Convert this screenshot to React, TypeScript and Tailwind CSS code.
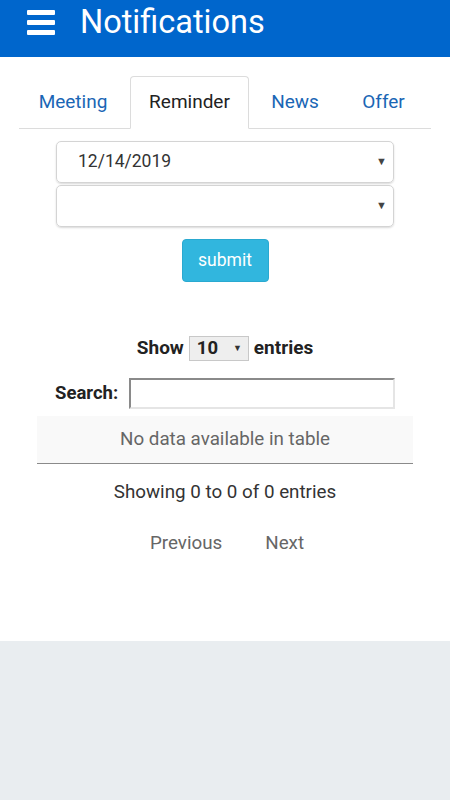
import React from "react";

export default function App() {
  const font = { fontFamily: "Roboto, 'Noto Sans', sans-serif" };
  return (
    <div className="w-[450px] h-[800px] flex flex-col bg-[#e9edf0]" style={font}>
      <header className="h-[57px] bg-[#0066cc] flex items-center">
        <div className="ml-[27px] w-[28px] flex flex-col gap-[5px] -mt-[13px]">
          <div className="h-[5px] bg-white rounded-[1px]" />
          <div className="h-[5px] bg-white rounded-[1px]" />
          <div className="h-[5px] bg-white rounded-[1px]" />
        </div>
        <h1 className="ml-[25px] text-[32.5px] leading-none text-white -mt-[13px]">Notifications</h1>
      </header>
      <main className="bg-white h-[584px] flex flex-col">
        <div className="mx-[19px] mt-[20px] h-[52px] border-b border-[#dcdcdc] flex items-end text-[19px]">
          <div className="w-[111px] h-full flex items-center justify-center text-[#1a66b5] pr-[3px]">Meeting</div>
          <div className="w-[119px] h-[53px] -mb-px bg-white border border-[#dcdcdc] border-b-white rounded-t-[4px] flex items-center justify-center text-[#222]">Reminder</div>
          <div className="w-[92px] h-full flex items-center justify-center text-[#1a66b5]">News</div>
          <div className="w-[85px] h-full flex items-center justify-center text-[#1a66b5]">Offer</div>
        </div>
        <div className="mx-[56px] mt-[12px] flex flex-col gap-[2px]">
          <div className="h-[42px] border border-[#d4d4d4] rounded-[5px] shadow-[0_1px_2px_rgba(0,0,0,0.15)] flex items-center justify-between pl-[21px] pr-[6px]">
            <span className="text-[17.5px] text-[#333] -mt-[2px]">12/14/2019</span>
            <span className="text-[11px] text-[#444]">▼</span>
          </div>
          <div className="h-[42px] border border-[#d4d4d4] rounded-[5px] shadow-[0_1px_2px_rgba(0,0,0,0.15)] flex items-center justify-end pr-[6px]">
            <span className="text-[11px] text-[#444]">▼</span>
          </div>
        </div>
        <div className="flex justify-center mt-[12px]">
          <button className="w-[87px] h-[43px] bg-[#31b6de] border border-[#2aa9d0] rounded-[4px] text-white text-[17.5px]">submit</button>
        </div>
        <div className="h-[25px] flex items-center justify-center mt-[54px] gap-[5px] text-[19px] font-bold text-[#222]">
          <span>Show</span>
          <div className="w-[60px] h-[25px] bg-[#eeeeee] border border-[#c8c8c8] flex items-center justify-between pl-[7px] pr-[6px]">
            <span className="text-[18.5px]">10</span>
            <span className="text-[9px] text-[#333]">▼</span>
          </div>
          <span>entries</span>
        </div>
        <div className="h-[31px] flex items-center mt-[17px] ml-[55px]">
          <span className="text-[18.5px] font-bold text-[#222]">Search:</span>
          <div className="ml-auto mr-[55px] w-[266px] h-[31px] border-2 border-t-[#8a8a8a] border-l-[#8a8a8a] border-r-[#e5e5e5] border-b-[#e5e5e5] bg-white" />
        </div>
        <div className="mx-[37px] mt-[7px] h-[48px] bg-[#f9f9f9] border-b border-[#8a8a8a] flex items-center justify-center text-[18.8px] text-[#666]">
          No data available in table
        </div>
        <div className="mt-[15px] h-[26px] flex items-center justify-center text-[18.8px] text-[#333]">Showing 0 to 0 of 0 entries</div>
        <div className="mt-[25px] h-[26px] flex items-center justify-center gap-[43px] text-[18.8px] text-[#666] pl-[4px]">
          <span>Previous</span>
          <span>Next</span>
        </div>
      </main>
    </div>
  );
}
